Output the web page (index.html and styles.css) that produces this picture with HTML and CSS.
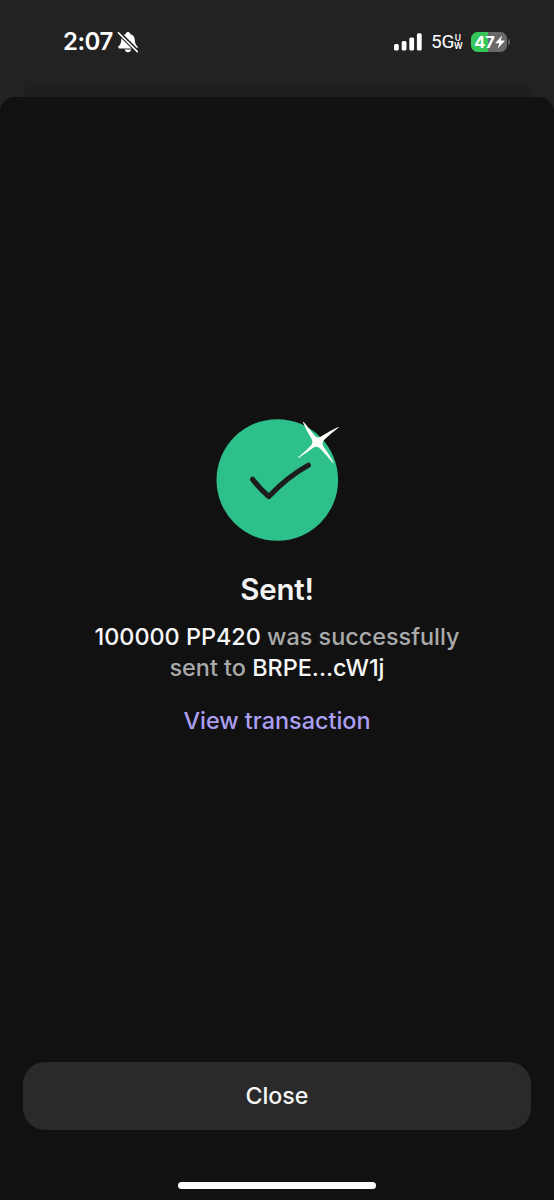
FILE: index.html
```html
<!DOCTYPE html>
<html lang="en">
<head>
<meta charset="utf-8">
<title>Sent</title>
<link rel="stylesheet" href="styles.css">
</head>
<body>
<div class="screen">
  <header class="status">
    <span class="time">2:07</span>
    <svg class="bell" width="22" height="22" viewBox="0 0 22 22">
      <path fill="#fff" d="M11 1C9.700 1 8.900 1.800 8.700 2.900C5.700 3.800 4.300 6 4.200 9C4.100 12.500 3.200 13.700 1.600 15.300C.9 16.100 1.200 17.500 2.500 17.500H19.500C20.800 17.500 21.100 16.100 20.400 15.300C18.800 13.700 17.900 12.500 17.800 9C17.700 6 16.300 3.800 13.300 2.900C13.100 1.800 12.300 1 11 1ZM7.800 18.500H14.200C13.900 20.200 12.700 21.200 11 21.200S8.100 20.200 7.800 18.500Z"/>
      <path stroke="#222" stroke-width="4" d="M1.500 1.500L20.500 20.500"/>
      <path stroke="#fff" stroke-width="1.600" stroke-linecap="round" d="M1.400 1.700L20.300 20.600"/>
    </svg>
    <svg class="signal" width="28" height="18" viewBox="0 0 28 18" fill="#fff">
      <rect x="0" y="11" width="4.800" height="6.500" rx="1.500"/>
      <rect x="7.700" y="8" width="4.800" height="9.500" rx="1.500"/>
      <rect x="15.300" y="4.500" width="4.800" height="13" rx="1.500"/>
      <rect x="22.900" y="0.300" width="4.800" height="17.200" rx="1.500"/>
    </svg>
    <span class="network">5G</span>
    <span class="band">U<br>W</span>
    <span class="battery">
      <span class="level">47</span>
      <svg width="10" height="14" viewBox="0 0 10 14"><path fill="#fff" d="M7.200 .4L.5 7.700Q.2 8.300 .9 8.300H4.300L2.700 13.500L9.500 6.300Q9.800 5.600 9.100 5.600H5.700Z"/></svg>
    </span>
    <span class="nub"></span>
  </header>
  <div class="behind"></div>
  <main class="sheet">
    <section class="result">
      <svg class="success" width="140" height="140" viewBox="0 0 140 140">
        <circle cx="70.300" cy="70" r="60.800" fill="#2ec08b"/>
        <path d="M45.600 69.300Q53.500 79.500 61.800 86.600Q80 67 101.300 55.200" fill="none" stroke="#1c1c1c" stroke-width="5.200" stroke-linecap="round" stroke-linejoin="round"/>
        <path fill="#fffffb" d="M96.300 11.800Q97 12 107.500 25.500Q110.500 29 114 26.600Q123.500 20.400 131.200 17Q132.200 16.900 131.400 17.700Q124.500 22.800 117 30Q114.400 33 116.300 36.300Q122.500 45 126.600 52.500Q126.500 53.600 125.300 52.300Q119 44.700 112.900 38.300Q109.800 35.700 106.600 37.600Q99 43.300 91.500 48Q90.400 48.200 91.200 47.200Q97.500 42 104 35.400Q106.500 32.500 104.600 29Q99.500 21 96 12.600Z"/>
      </svg>
      <h1>Sent!</h1>
      <p class="message"><span class="line"><strong>100000 PP420</strong> was successfully</span><span class="line">sent to <strong>BRPE...cW1j</strong></span></p>
      <a class="link">View transaction</a>
    </section>
    <button class="close">Close</button>
    <div class="home"></div>
  </main>
</div>
</body>
</html>
```
FILE: styles.css
```css
* { box-sizing: border-box; }
body { margin: 0; background: #222; font-family: Inter, "Liberation Sans", sans-serif; }
.screen { width: 554px; height: 1200px; overflow: hidden; display: flex; flex-direction: column; background: #222; }
.status { height: 83px; flex: none; display: flex; align-items: center; padding: 0 44px 0 63px; color: #fff; }
.time { width: 50px; flex: none; font-size: 24px; font-weight: 600; line-height: 30px; letter-spacing: -0.5px; white-space: nowrap; }
.bell { margin-left: 4px; flex: none; }
.signal { margin-left: 255px; flex: none; }
.network { width: 23px; flex: none; margin-left: 9px; font-family: Roboto, "Liberation Sans", sans-serif; font-size: 19px; line-height: 24px; letter-spacing: -0.3px; }
.band { flex: none; width: 8px; font-size: 8.500px; line-height: 8px; font-weight: 600; text-align: center; }
.battery { display: flex; align-items: center; justify-content: center; width: 36px; height: 20px; margin-left: 9px; padding-left: 1px; flex: none; border-radius: 6.500px; background: linear-gradient(90deg, #35c759 0 46%, #68696b 46%); }
.level { font-size: 16.500px; line-height: 20px; font-weight: 700; letter-spacing: -0.2px; }
.nub { width: 2px; height: 6px; margin-left: 1px; flex: none; border-radius: 0 2px 2px 0; background: #5c5c5e; }
.behind { height: 14px; flex: none; margin: 0 22px 0 24px; border-radius: 14px 14px 0 0; background: #1f1f21; }
.sheet { flex: 1; display: flex; flex-direction: column; align-items: center; border-radius: 15px 15px 0 0; background: #111; }
.result { height: 965px; flex: none; display: flex; flex-direction: column; align-items: center; padding-top: 313px; }
.success { display: block; }
h1 { margin: 19px 0 0; color: #f4f4f4; font-size: 29.500px; line-height: 40px; font-weight: 600; letter-spacing: -0.2px; }
.message { margin: 12px 0 0; color: #aaa; font-size: 23.400px; line-height: 31px; font-weight: 500; text-align: center; }
.line { display: block; white-space: nowrap; }
strong { color: #f7f7f7; font-weight: 500; }
.link { margin-top: 22px; color: #ab9ff2; font-size: 23.400px; line-height: 31px; font-weight: 500; }
.close { width: 508px; height: 68px; flex: none; padding: 0; border: 0; border-radius: 22px; background: #2a2a2a; color: #f7f7f7; font: 500 23.200px/30px Inter, "Liberation Sans", sans-serif; }
.home { width: 198px; height: 7px; margin-top: 52px; border-radius: 4px; background: #fff; }
```
